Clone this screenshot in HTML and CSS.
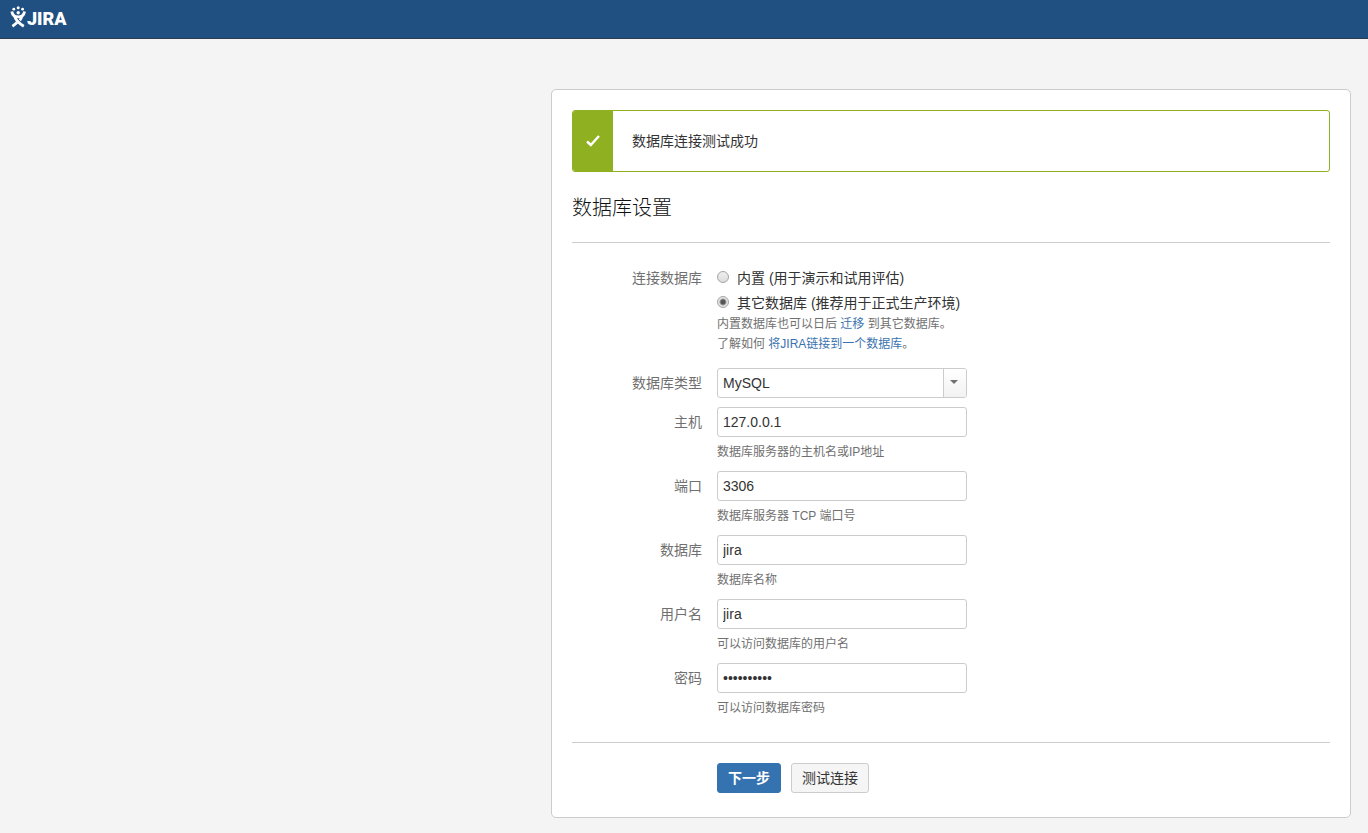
FILE: index.html
```
<!DOCTYPE html>
<html lang="zh-CN">
<head>
<meta charset="utf-8">
<title>JIRA 数据库设置</title>
<link rel="stylesheet" href="styles.css">
</head>
<body>
<header class="header">
  <a class="logo" href="#">
    <svg class="logo-mark" viewBox="0 0 17 22" width="17" height="22" aria-hidden="true">
      <g fill="#fff">
        <circle cx="3.800" cy="3.200" r="1.400"/><circle cx="8.200" cy="1.800" r="1.500"/><circle cx="12.600" cy="3.200" r="1.400"/>
        <circle cx="8.200" cy="6.800" r="1.700"/>
      </g>
      <g fill="none" stroke="#fff" stroke-width="2.800">
        <path d="M1.800 5.500C2.400 9 4.800 10.900 8.200 10.900S14 9 14.600 5.500"/>
        <path d="M4.600 9.800c.8 4.400 4.400 7.600 9.200 10.400"/>
        <path d="M11.800 9.800c-.3 2-1 3.400-2 4.600M7 16.400c-1.200 1.500-2.700 2.700-4.600 3.800"/>
      </g>
    </svg>
    <span class="logo-text">JIRA</span>
  </a>
</header>
<main class="panel">
  <div class="message" role="status">
    <div class="message-icon">
      <svg viewBox="0 0 16 14" width="16" height="14" aria-hidden="true"><path d="M2 7.500l3.800 3.500L14 2" fill="none" stroke="#fff" stroke-width="2.400"/></svg>
    </div>
    <p class="message-text">数据库连接测试成功</p>
  </div>
  <h1 class="title">数据库设置</h1>
  <form class="form">
    <div class="fields">
      <div class="row row-choice" role="radiogroup" aria-labelledby="connection">
        <span class="label label-short" id="connection">连接数据库</span>
        <div class="control">
          <label class="choice"><input class="radio" type="radio" name="db"><span>内置 (用于演示和试用评估)</span></label>
          <label class="choice"><input class="radio" type="radio" name="db" checked><span>其它数据库 (推荐用于正式生产环境)</span></label>
          <p class="hint">内置数据库也可以日后 <a class="link" href="#">迁移</a> 到其它数据库。<br>了解如何 <a class="link" href="#">将JIRA链接到一个数据库</a>。</p>
        </div>
      </div>
      <div class="row">
        <label class="label" for="type">数据库类型</label>
        <div class="control">
          <div class="combo">
            <select class="input select" id="type"><option>MySQL</option></select>
            <span class="combo-arrow" aria-hidden="true"></span>
          </div>
        </div>
      </div>
      <div class="row">
        <label class="label" for="host">主机</label>
        <div class="control"><input class="input" id="host" type="text" value="127.0.0.1"><p class="hint hint-below">数据库服务器的主机名或IP地址</p></div>
      </div>
      <div class="row">
        <label class="label" for="port">端口</label>
        <div class="control"><input class="input" id="port" type="text" value="3306"><p class="hint hint-below">数据库服务器 TCP 端口号</p></div>
      </div>
      <div class="row">
        <label class="label" for="database">数据库</label>
        <div class="control"><input class="input" id="database" type="text" value="jira"><p class="hint hint-below">数据库名称</p></div>
      </div>
      <div class="row">
        <label class="label" for="user">用户名</label>
        <div class="control"><input class="input" id="user" type="text" value="jira"><p class="hint hint-below">可以访问数据库的用户名</p></div>
      </div>
      <div class="row">
        <label class="label" for="password">密码</label>
        <div class="control"><input class="input" id="password" type="password" value="jirajira12"><p class="hint hint-below">可以访问数据库密码</p></div>
      </div>
    </div>
    <div class="actions">
      <button class="button button-primary" type="button">下一步</button>
      <button class="button" type="button">测试连接</button>
    </div>
  </form>
</main>
</body>
</html>
```
FILE: styles.css
```
* { box-sizing: border-box; }
body {
  margin: 0;
  background: #f4f4f4;
  color: #333;
  font: 14px/20px "Liberation Sans", "Noto Sans CJK SC", sans-serif;
}
p, h1 { margin: 0; }
.header {
  display: flex;
  align-items: center;
  height: 39px;
  padding: 0 10px 4px;
  background: #205081;
  border-bottom: 1px solid #2e3d54;
}
.logo { display: flex; align-items: center; color: #fff; text-decoration: none; }
.logo-mark { display: block; }
.logo-text { padding-top: 4px; font: 900 18px/22px Roboto, sans-serif; }
.panel {
  max-width: 800px;
  margin: 50px 17px 15px auto;
  padding: 20px 20px 24px;
  background: #fff;
  border: 1px solid #ccc;
  border-radius: 5px;
}
.message {
  display: flex;
  min-height: 62px;
  border: 1px solid #8eb021;
  border-radius: 3px;
  overflow: hidden;
}
.message-icon {
  display: flex;
  flex: none;
  align-items: center;
  justify-content: center;
  width: 40px;
  background: #8eb021;
}
.message-text { align-self: center; padding: 0 19px; }
.title {
  margin-top: 20px;
  padding-bottom: 18px;
  border-bottom: 1px solid #ccc;
  color: #111;
  font-size: 20px;
  line-height: 32px;
  font-weight: 300;
}
.fields { padding: 25px 0 15px; border-bottom: 1px solid #ccc; }
.row { display: flex; gap: 15px; margin-bottom: 9px; }
.row-choice { margin-bottom: 14px; }
.label { flex: none; width: 130px; line-height: 30px; text-align: right; color: #707070; }
.label-short { line-height: 20px; }
.control { flex: 1; min-width: 0; }
.choice { display: flex; align-items: center; gap: 7px; margin-bottom: 5px; }
.choice + .choice { margin-bottom: 1px; }
.radio {
  flex: none;
  appearance: none;
  width: 12px;
  height: 12px;
  margin: 0 1px 2px 0;
  border: 1px solid #a5a5a5;
  border-radius: 50%;
  background: linear-gradient(#eee, #ddd);
}
.radio:checked { background: radial-gradient(circle, #555 2px, #e6e6e6 4px); }
.hint { font-size: 12px; line-height: 20px; color: #707070; }
.hint-below { margin-top: 5px; }
.link { color: #3b73af; text-decoration: none; }
.input {
  display: block;
  width: 100%;
  max-width: 250px;
  height: 30px;
  padding: 0 5px;
  background: #fff;
  border: 1px solid #ccc;
  border-radius: 3px;
  color: #333;
  font: inherit;
}
.combo { position: relative; max-width: 250px; }
.select { appearance: none; }
.combo-arrow {
  position: absolute;
  top: 1px;
  right: 1px;
  bottom: 1px;
  width: 23px;
  border-left: 1px solid #ccc;
  border-radius: 0 2px 2px 0;
  background: linear-gradient(#fff, #f2f2f2);
  pointer-events: none;
}
.combo-arrow::before {
  content: "";
  position: absolute;
  top: 11px;
  left: 6px;
  border: 4px solid transparent;
  border-top-color: #707070;
  border-bottom: 0;
}
.actions { display: flex; gap: 10px; padding: 20px 0 0 145px; }
.button {
  height: 30px;
  padding: 0 10px;
  background: #f5f5f5;
  border: 1px solid #ccc;
  border-radius: 3px;
  color: #333;
  font: inherit;
}
.button-primary { background: #3572b0; border-color: #3572b0; color: #fff; font-weight: 700; }
```
